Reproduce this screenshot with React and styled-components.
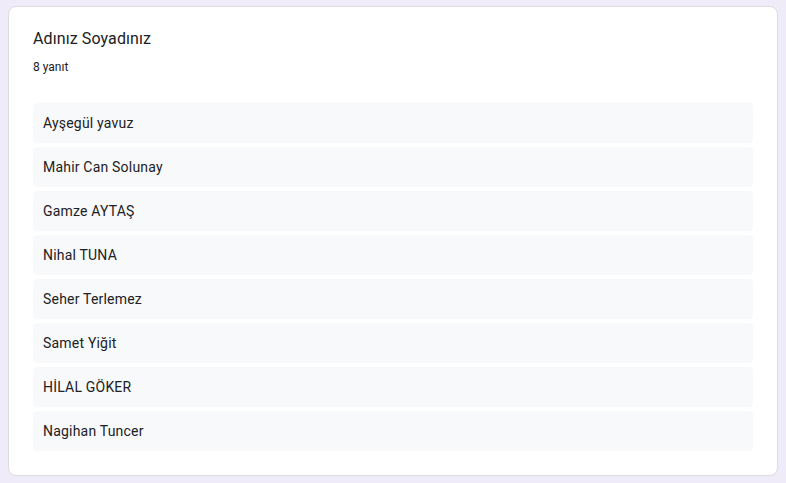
import React from "react";
import styled, { createGlobalStyle } from "styled-components";

const GlobalStyle = createGlobalStyle`
    html, body {
        margin: 0;
        padding: 0;
        background-color: #f0ebf8;
    }
    body {
        font-family: Roboto, "Liberation Sans", Arial, sans-serif;
        color: #202124;
    }
`;

const Page = styled.div`
    padding: 6px 8px 6px 8px;
`;

const Card = styled.section`
    box-sizing: border-box;
    width: 770px;
    background-color: #fff;
    border: 1px solid #dadce0;
    border-radius: 8px;
    padding: 20px 24px 24px 24px;
`;

const Title = styled.h2`
    margin: 0;
    font-size: 16px;
    line-height: 24px;
    font-weight: 400;
    letter-spacing: 0.1px;
    color: #202124;
`;

const Count = styled.div`
    margin-top: 8px;
    font-size: 12px;
    line-height: 16px;
    color: #202124;
`;

const List = styled.div`
    display: flex;
    flex-direction: column;
    gap: 4px;
    margin-top: 28px;
`;

const Answer = styled.div`
    height: 40px;
    display: flex;
    align-items: center;
    padding: 0 10px;
    border-radius: 4px;
    background-color: #f8f9fa;
    font-size: 14px;
    letter-spacing: 0.2px;
    color: #202124;
`;

const answers = [
    "Ayşegül yavuz",
    "Mahir Can Solunay",
    "Gamze AYTAŞ",
    "Nihal TUNA",
    "Seher Terlemez",
    "Samet Yiğit",
    "HİLAL GÖKER",
    "Nagihan Tuncer",
];

export default function App() {
    return (
        <Page>
            <GlobalStyle />
            <Card>
                <Title>Adınız Soyadınız</Title>
                <Count>{answers.length} yanıt</Count>
                <List>
                    {answers.map((name) => (
                        <Answer key={name}>{name}</Answer>
                    ))}
                </List>
            </Card>
        </Page>
    );
}
